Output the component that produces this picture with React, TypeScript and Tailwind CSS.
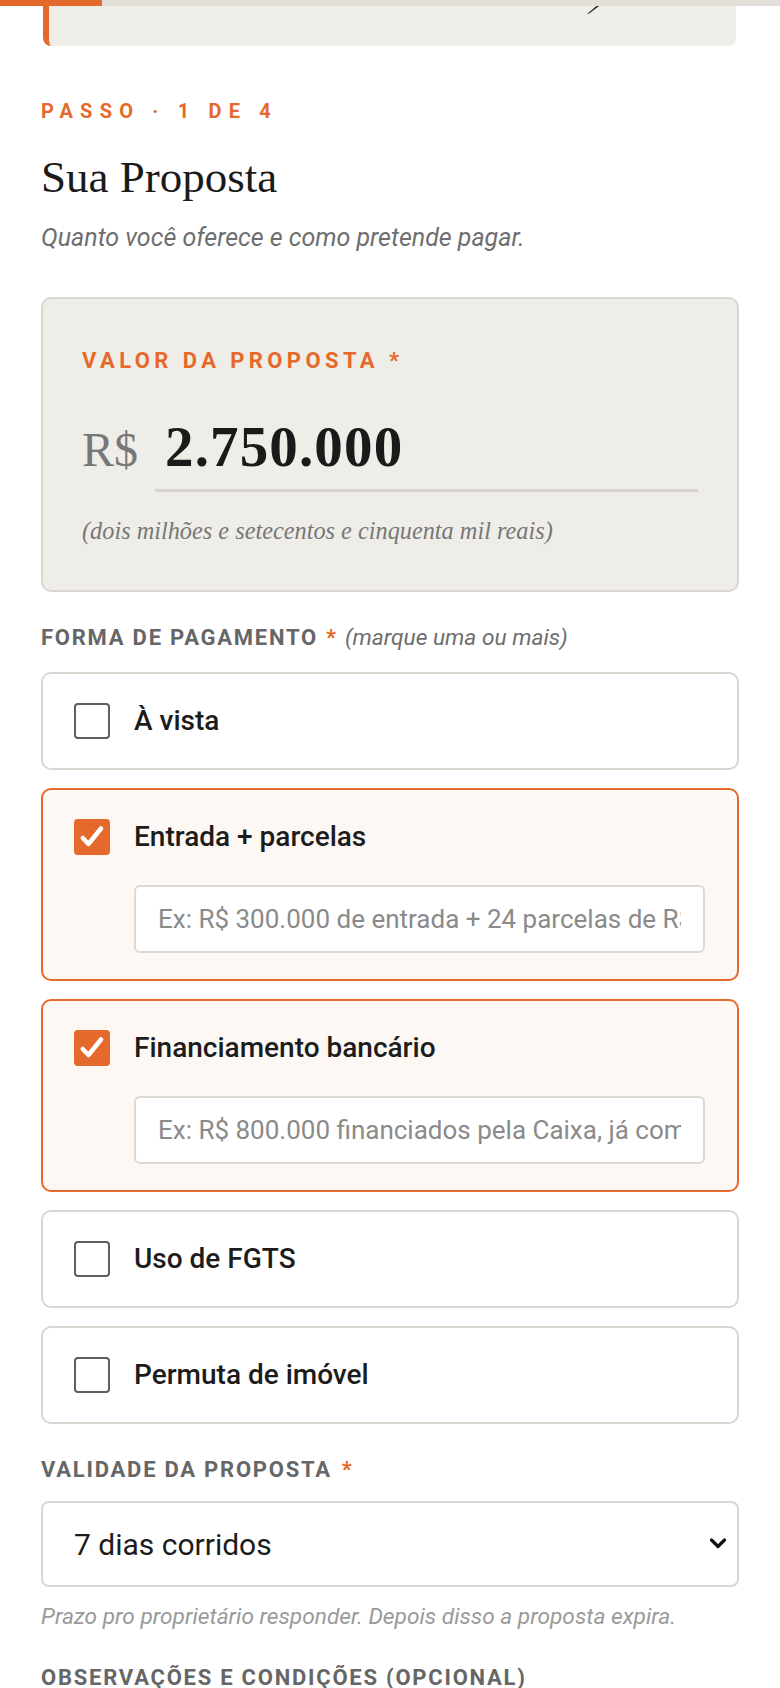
import React from "react";

function Check({ checked }: { checked: boolean }) {
  if (checked) {
    return (
      <span className="flex h-[36px] w-[36px] shrink-0 items-center justify-center rounded-[4px] bg-[#e4692a]">
        <svg width="30" height="30" viewBox="0 0 24 24" fill="none">
          <path d="M4.6 12.8l4.6 4.8L19.2 5.2" stroke="#ffffff" strokeWidth="3.6" strokeLinecap="round" strokeLinejoin="round" />
        </svg>
      </span>
    );
  }
  return <span className="h-[36px] w-[36px] shrink-0 rounded-[4px] border-2 border-[#5e5e5e] bg-white" />;
}

function Option({ label, checked, placeholder }: { label: string; checked?: boolean; placeholder?: string }) {
  return (
    <div
      className={
        checked
          ? "rounded-[10px] border-2 border-[#e4692a] bg-[#fdf8f4]"
          : "rounded-[10px] border-2 border-[#dad7d1] bg-white"
      }
    >
      <div className="flex items-center gap-[24px] px-[31px] py-[29px]">
        <Check checked={!!checked} />
        <span className="text-[28px] leading-[36px] font-medium text-[#1c1c1c]">{label}</span>
      </div>
      {checked && (
        <div className="pl-[91px] pr-[32px] pt-[1px] pb-[26px]">
          <input
            readOnly
            placeholder={placeholder}
            className="block h-[68px] w-full rounded-[6px] border-2 border-[#dcd9d3] bg-white px-[22px] font-['Roboto',sans-serif] text-[26px] text-[#1c1c1c] outline-none placeholder:text-[#8a8a8a]"
          />
        </div>
      )}
    </div>
  );
}

export default function App() {
  return (
    <div className="min-h-[1688px] bg-white font-['Roboto',sans-serif] text-[#1c1c1c]">
      <div className="flex h-[6px] bg-[#e3e0da]">
        <div className="w-[102px] bg-[#e4692a]" />
      </div>
      <div className="relative ml-[43px] mr-[44px] h-[40px] rounded-b-[8px] border-l-[6px] border-[#e4692a] bg-[#efede8]">
        <svg className="absolute left-[537px] top-0" width="14" height="9" viewBox="0 0 14 9">
          <path d="M13 0 L10.5 0 L2 7.2 L1 8.2 L3.2 7.6 Z" fill="#1a1a1a" />
        </svg>
      </div>

      <div className="px-[41px]">
        <p className="mt-[53px] text-[20px] leading-[24px] font-bold tracking-[0.36em] text-[#e4692a]">PASSO · 1 DE 4</p>
        <h1 className="mt-[28px] font-['Liberation_Serif',serif] text-[45px] leading-[52px] font-normal text-[#1a1a1a]">
          Sua Proposta
        </h1>
        <p className="mt-[19px] text-[25px] leading-[32px] italic text-[#6e6e6e]">
          Quanto você oferece e como pretende pagar.
        </p>

        <div className="mt-[43px] rounded-[10px] border-2 border-[#dad7d0] bg-[#efede8] pl-[39px] pr-[39px] pt-[49px] pb-[44px]">
          <p className="text-[22px] leading-[26px] font-bold tracking-[0.2em] text-[#e4692a]">VALOR DA PROPOSTA *</p>
          <div className="mt-[43px] flex items-baseline gap-[17px]">
            <span className="font-['Liberation_Serif',serif] text-[48px] leading-[60px] text-[#777777]">R$</span>
            <div className="flex-1 border-b-[3px] border-[#d6d3cc] pl-[10px] pb-[12px] font-['Liberation_Serif',serif] text-[57px] leading-[60px] font-semibold tracking-[0.02em] text-[#1a1a1a]">
              2.750.000
            </div>
          </div>
          <p className="mt-[24px] font-['Liberation_Serif',serif] text-[24.3px] leading-[30px] italic text-[#777777]">
            (dois milhões e setecentos e cinquenta mil reais)
          </p>
        </div>

        <p className="mt-[33px] text-[22px] leading-[26px]">
          <span className="font-bold tracking-[0.08em] text-[#666666]">FORMA DE PAGAMENTO</span>
          <span className="ml-[8px] font-bold text-[#e4692a]">*</span>
          <span className="ml-[9px] text-[22.7px] italic text-[#6e6e6e]">(marque uma ou mais)</span>
        </p>

        <div className="mt-[21px] flex flex-col gap-[18px]">
          <Option label="À vista" />
          <Option label="Entrada + parcelas" checked placeholder="Ex: R$ 300.000 de entrada + 24 parcelas de R$ 100.000" />
          <Option label="Financiamento bancário" checked placeholder="Ex: R$ 800.000 financiados pela Caixa, já com crédito aprovado" />
          <Option label="Uso de FGTS" />
          <Option label="Permuta de imóvel" />
        </div>

        <p className="mt-[33px] text-[22px] leading-[26px]">
          <span className="font-bold tracking-[0.08em] text-[#666666]">VALIDADE DA PROPOSTA</span>
          <span className="ml-[10px] font-bold text-[#e4692a]">*</span>
        </p>

        <div className="relative mt-[18px]">
          <select
            defaultValue="7"
            className="block h-[86px] w-full appearance-none rounded-[8px] border-2 border-[#dad7d1] bg-white px-[31px] font-['Roboto',sans-serif] text-[30px] text-[#1c1c1c] outline-none"
          >
            <option value="7">7 dias corridos</option>
            <option value="15">15 dias corridos</option>
            <option value="30">30 dias corridos</option>
          </select>
          <svg className="pointer-events-none absolute right-[12px] top-[36px]" width="18" height="13" viewBox="0 0 18 13" fill="none">
            <path d="M2.5 3l6.5 6.5L15.5 3" stroke="#111111" strokeWidth="3.2" strokeLinecap="round" strokeLinejoin="round" />
          </svg>
        </div>

        <p className="mt-[17px] text-[22.7px] leading-[26px] italic text-[#9a9a9a]">
          Prazo pro proprietário responder. Depois disso a proposta expira.
        </p>

        <p className="mt-[35px] text-[22px] leading-[26px] font-bold tracking-[0.08em] text-[#666666]">
          OBSERVAÇÕES E CONDIÇÕES (OPCIONAL)
        </p>
        <div className="h-[40px]" />
      </div>
    </div>
  );
}
